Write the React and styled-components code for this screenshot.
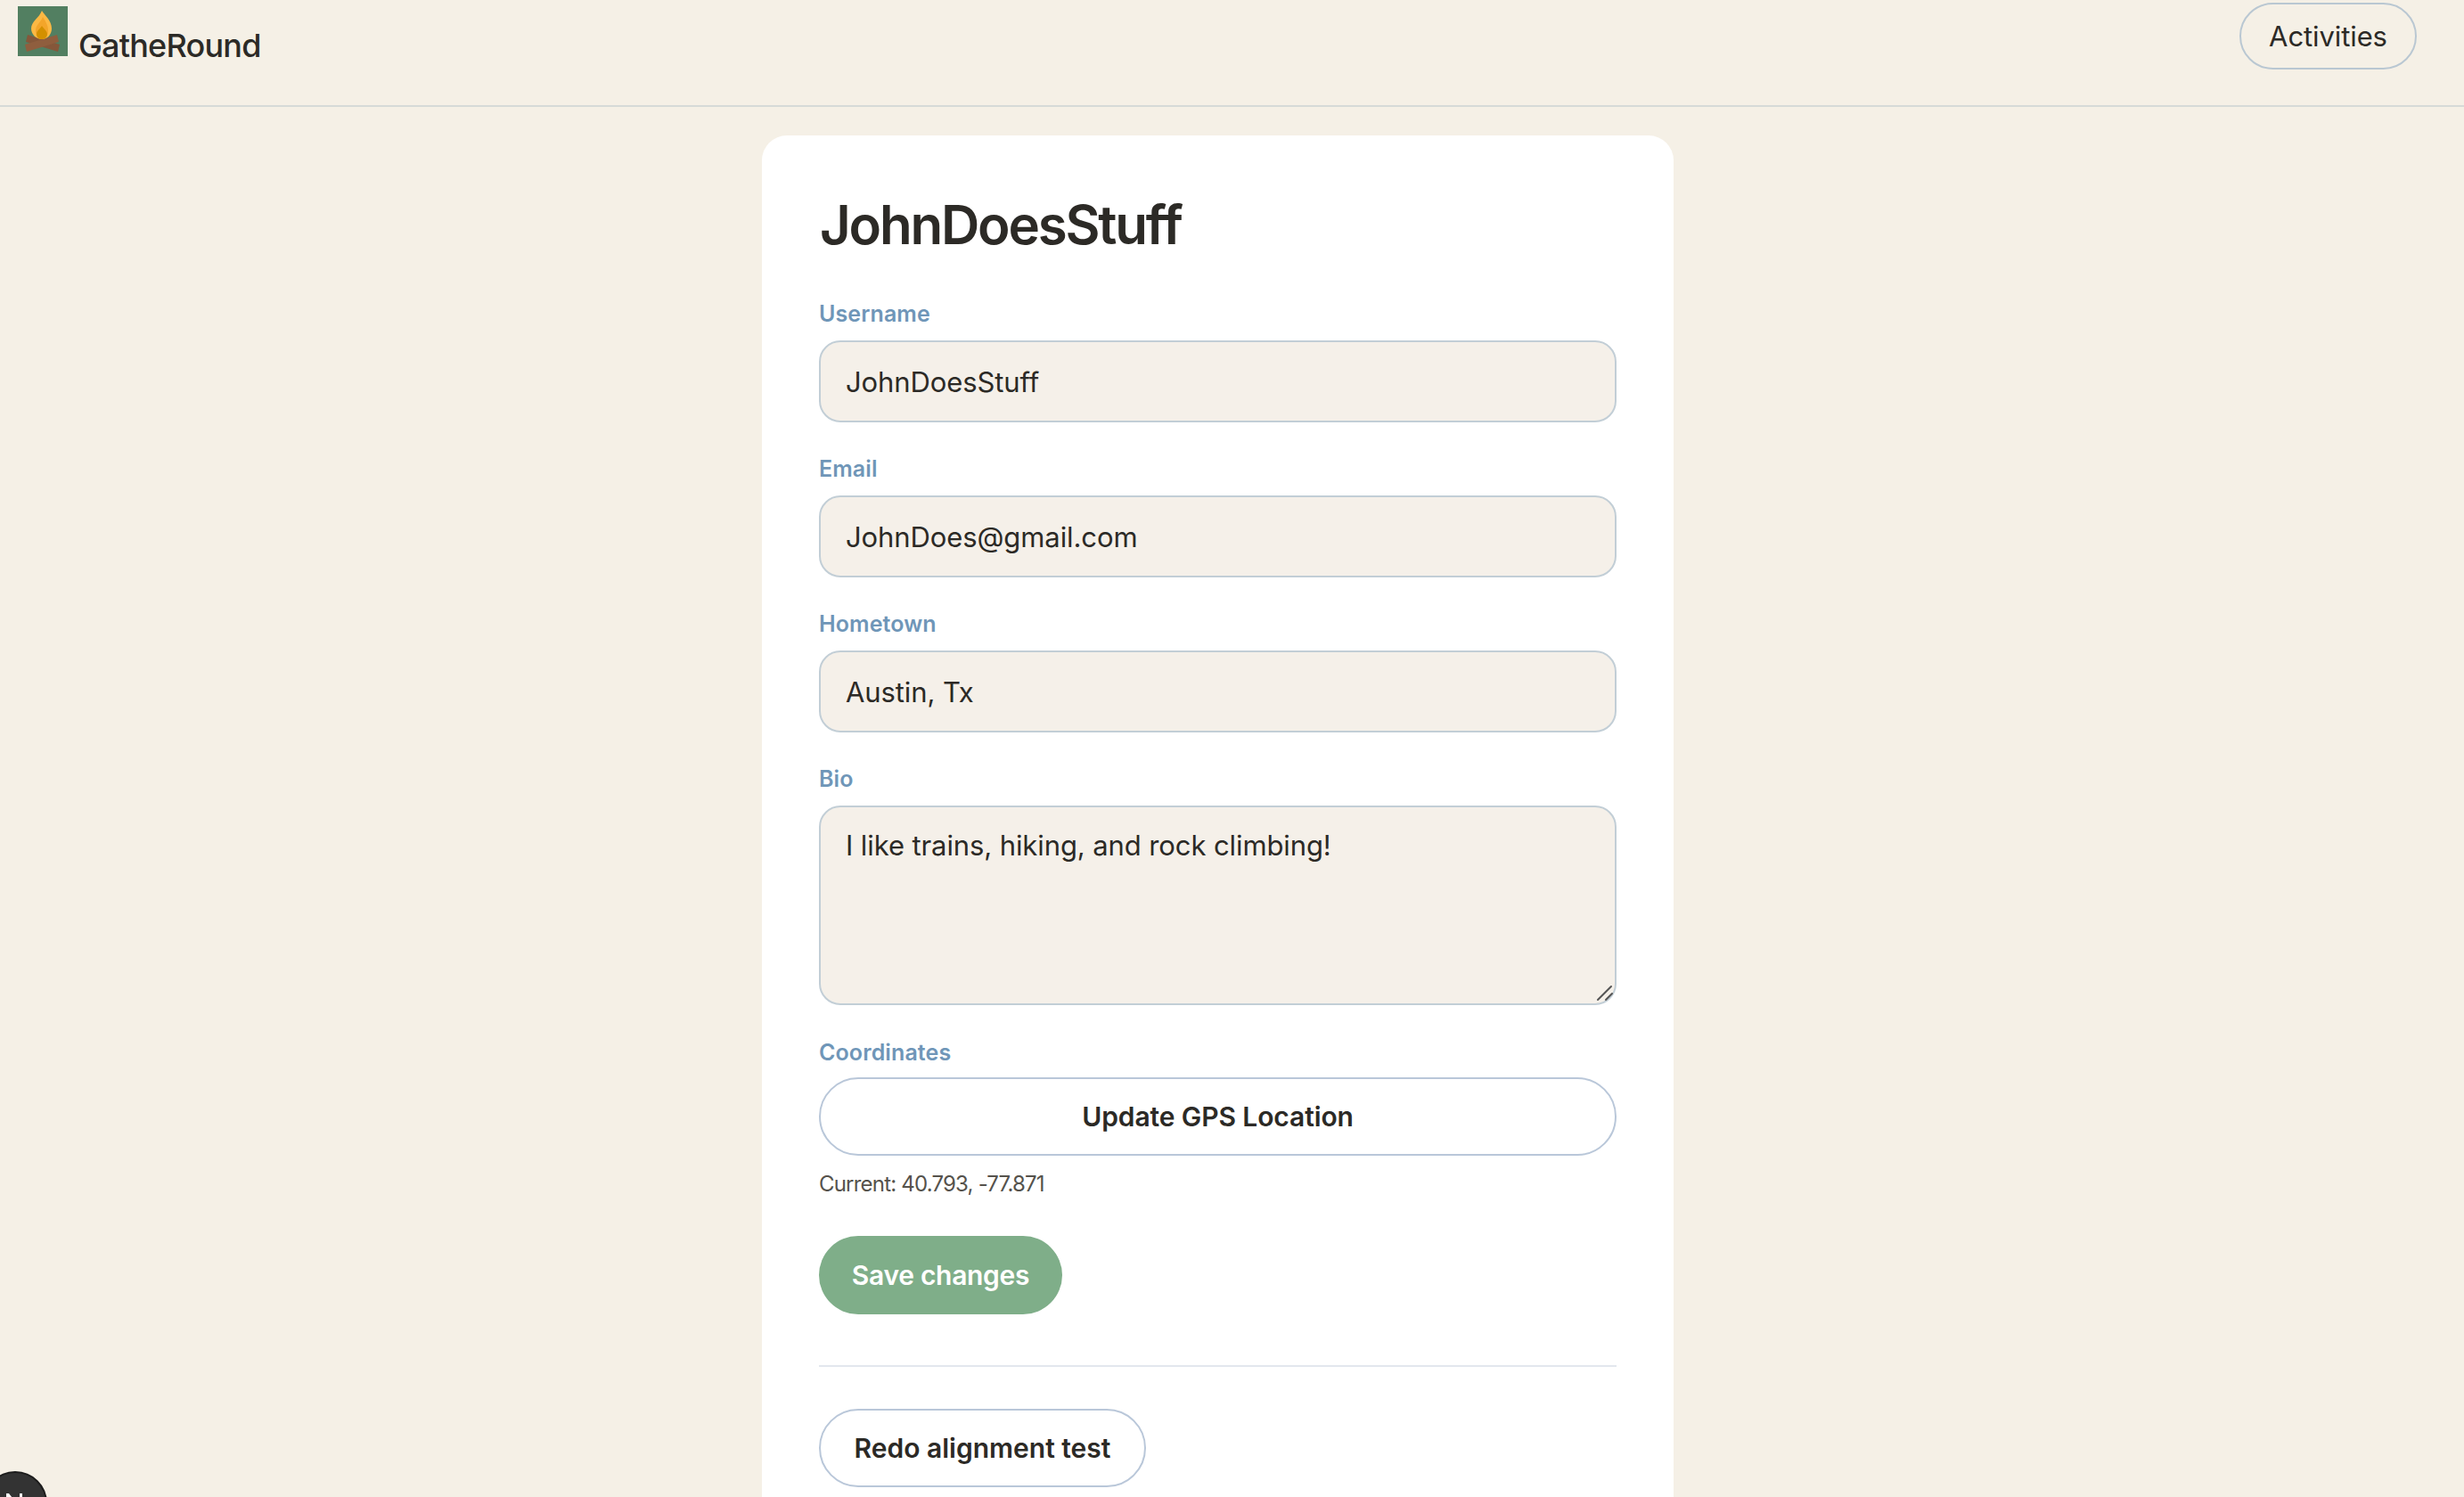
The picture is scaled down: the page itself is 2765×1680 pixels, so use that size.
import React from "react";
import styled, { createGlobalStyle } from "styled-components";

const Global = createGlobalStyle`
  html, body {
    margin: 0;
    height: 100%;
    overflow: hidden;
    background: #f5f0e6;
  }
  body {
    font-family: Inter, "Liberation Sans", sans-serif;
    color: #2c2a26;
  }
`;

const Page = styled.div`
  height: 1680px;
  overflow: hidden;
`;

const Header = styled.header`
  height: 118px;
  box-sizing: content-box;
  border-bottom: 2px solid #d6dad8;
  display: flex;
  justify-content: space-between;
  align-items: flex-start;
  padding: 0 53px 0 20px;
`;

const Brand = styled.div`
  display: flex;
  align-items: flex-end;
  gap: 12px;
  margin-top: 7px;
`;

const BrandName = styled.span`
  font-size: 36px;
  line-height: 44px;
  font-weight: 500;
  letter-spacing: -0.8px;
  margin-bottom: -10px;
`;

const NavButton = styled.button`
  margin-top: 3px;
  height: 75px;
  width: 199px;
  box-sizing: border-box;
  border: 2px solid #b9c7d2;
  border-radius: 38px;
  background: transparent;
  color: #2c2a26;
  font: 400 31px Inter, sans-serif;
  letter-spacing: -0.1px;
  padding: 0;
`;

const Main = styled.main`
  display: flex;
  justify-content: center;
  padding: 32px 32px 0 0;
`;

const Card = styled.section`
  width: 1023px;
  height: 1600px;
  box-sizing: border-box;
  background: #fff;
  border-radius: 28px;
  padding: 64px 64px 0;
`;

const Title = styled.h1`
  margin: 0 0 48px 1px;
  font-size: 60px;
  line-height: 72px;
  font-weight: 600;
  letter-spacing: -2.2px;
`;

const Field = styled.div`
  display: flex;
  flex-direction: column;
  gap: ${(p) => p.$gap ?? 14}px;
  margin-bottom: ${(p) => p.$bottom ?? 36}px;
`;

const Label = styled.label`
  font-size: 25px;
  line-height: 32px;
  font-weight: 600;
  letter-spacing: 0.1px;
  color: #6f96b8;
`;

const controlStyles = `
  display: block;
  width: 100%;
  box-sizing: border-box;
  border: 2px solid #c2ced6;
  border-radius: 24px;
  background: #f5f0e9;
  color: #2c2a26;
  font: 400 31px Inter, sans-serif;
  letter-spacing: -0.1px;
  padding: 0 28px;
  outline: none;
`;

const TextInput = styled.input`
  ${controlStyles}
  height: 92px;
`;

const BioWrap = styled.div`
  position: relative;
`;

const BioInput = styled.textarea`
  ${controlStyles}
  height: 224px;
  padding: 24px 28px;
  line-height: 38px;
  resize: none;
`;

const ResizeGrip = styled.svg`
  position: absolute;
  right: 0;
  bottom: 0;
  width: 24px;
  height: 24px;
`;

const WideButton = styled.button`
  display: block;
  width: 100%;
  height: 88px;
  box-sizing: border-box;
  border: 2px solid #b9c7d9;
  border-radius: 44px;
  background: #fff;
  color: #2c2a26;
  font: 600 30px Inter, sans-serif;
  letter-spacing: -0.1px;
`;

const Current = styled.p`
  margin: 17px 0 43px;
  font-size: 24px;
  line-height: 30px;
  letter-spacing: -0.8px;
  color: #55524c;
`;

const PillButton = styled.button`
  display: block;
  height: 88px;
  box-sizing: border-box;
  border: ${(p) => (p.$primary ? "none" : "2px solid #b9c7d9")};
  border-radius: 44px;
  background: ${(p) => (p.$primary ? "#7fae89" : "#fff")};
  color: ${(p) => (p.$primary ? "#fff" : "#2c2a26")};
  font: 600 30px Inter, sans-serif;
  letter-spacing: ${(p) => (p.$primary ? "-0.3px" : "0")};
  width: ${(p) => p.$width}px;
  padding: 0;
`;

const Divider = styled.hr`
  border: none;
  height: 2px;
  background: #e3e7ee;
  margin: 57px 0 47px;
`;

const DevBadge = styled.div`
  position: fixed;
  left: -19px;
  top: 1651px;
  width: 72px;
  height: 72px;
  box-sizing: border-box;
  border-radius: 50%;
  border: 2px solid #1c1c1c;
  background: #333;
  display: flex;
  align-items: center;
  justify-content: center;
`;

function CampfireLogo() {
  return (
    <svg width="56" height="56" viewBox="0 0 56 56" aria-hidden="true">
      <rect width="56" height="56" fill="#527f61" />
      <path d="M11 32 L47 43 L45 51 L9 40 Z" fill="#85573a" />
      <path d="M44 32 L8 43 L10 51 L46 40 Z" fill="#8f5e3e" />
      <path
        d="M27 5 C30 10 38 16 38 25 C38 32 33 37 27 37 C21 37 15 32 15 25 C15 17 24 13 27 5 Z"
        fill="#fbb844"
      />
      <path
        d="M28 12 C31 17 34 21 34 27 C34 33 31 37 27 37 C23 37 20 33 20 27 C20 21 26 18 28 12 Z"
        fill="#f3a52a"
      />
      <path
        d="M27 22 C29 25 33 28 33 31 C33 35 30 37 27 37 C24 37 21 35 21 31 C21 28 25 25 27 22 Z"
        fill="#d39000"
      />
    </svg>
  );
}

function NextMark() {
  return (
    <svg width="30" height="30" viewBox="0 0 30 30" aria-hidden="true">
      <path d="M5 26 V4 H8 L25 26 H21 L8 9 V26 Z" fill="#fff" />
      <rect x="20" y="4" width="3" height="14" fill="#fff" />
    </svg>
  );
}

const FIELDS = [
  { id: "username", label: "Username", value: "JohnDoesStuff" },
  { id: "email", label: "Email", value: "JohnDoes@gmail.com" },
  { id: "hometown", label: "Hometown", value: "Austin, Tx" },
];

export default function App() {
  return (
    <Page>
      <Global />
      <Header>
        <Brand>
          <CampfireLogo />
          <BrandName>GatheRound</BrandName>
        </Brand>
        <NavButton>Activities</NavButton>
      </Header>
      <Main>
        <Card>
          <Title>JohnDoesStuff</Title>
          {FIELDS.map((f) => (
            <Field key={f.id}>
              <Label htmlFor={f.id}>{f.label}</Label>
              <TextInput id={f.id} defaultValue={f.value} />
            </Field>
          ))}
          <Field $bottom={37}>
            <Label htmlFor="bio">Bio</Label>
            <BioWrap>
              <BioInput id="bio" defaultValue="I like trains, hiking, and rock climbing!" />
              <ResizeGrip viewBox="0 0 24 24" aria-hidden="true">
                <path d="M3 18 L18 3 M12 18 L19 11" stroke="#555" strokeWidth="2" strokeLinecap="round" />
              </ResizeGrip>
            </BioWrap>
          </Field>
          <Field $bottom={0} $gap={12}>
            <Label>Coordinates</Label>
            <WideButton>Update GPS Location</WideButton>
          </Field>
          <Current>Current: 40.793, -77.871</Current>
          <PillButton $primary $width={273}>Save changes</PillButton>
          <Divider />
          <PillButton $width={367}>Redo alignment test</PillButton>
        </Card>
      </Main>
      <DevBadge>
        <NextMark />
      </DevBadge>
    </Page>
  );
}
